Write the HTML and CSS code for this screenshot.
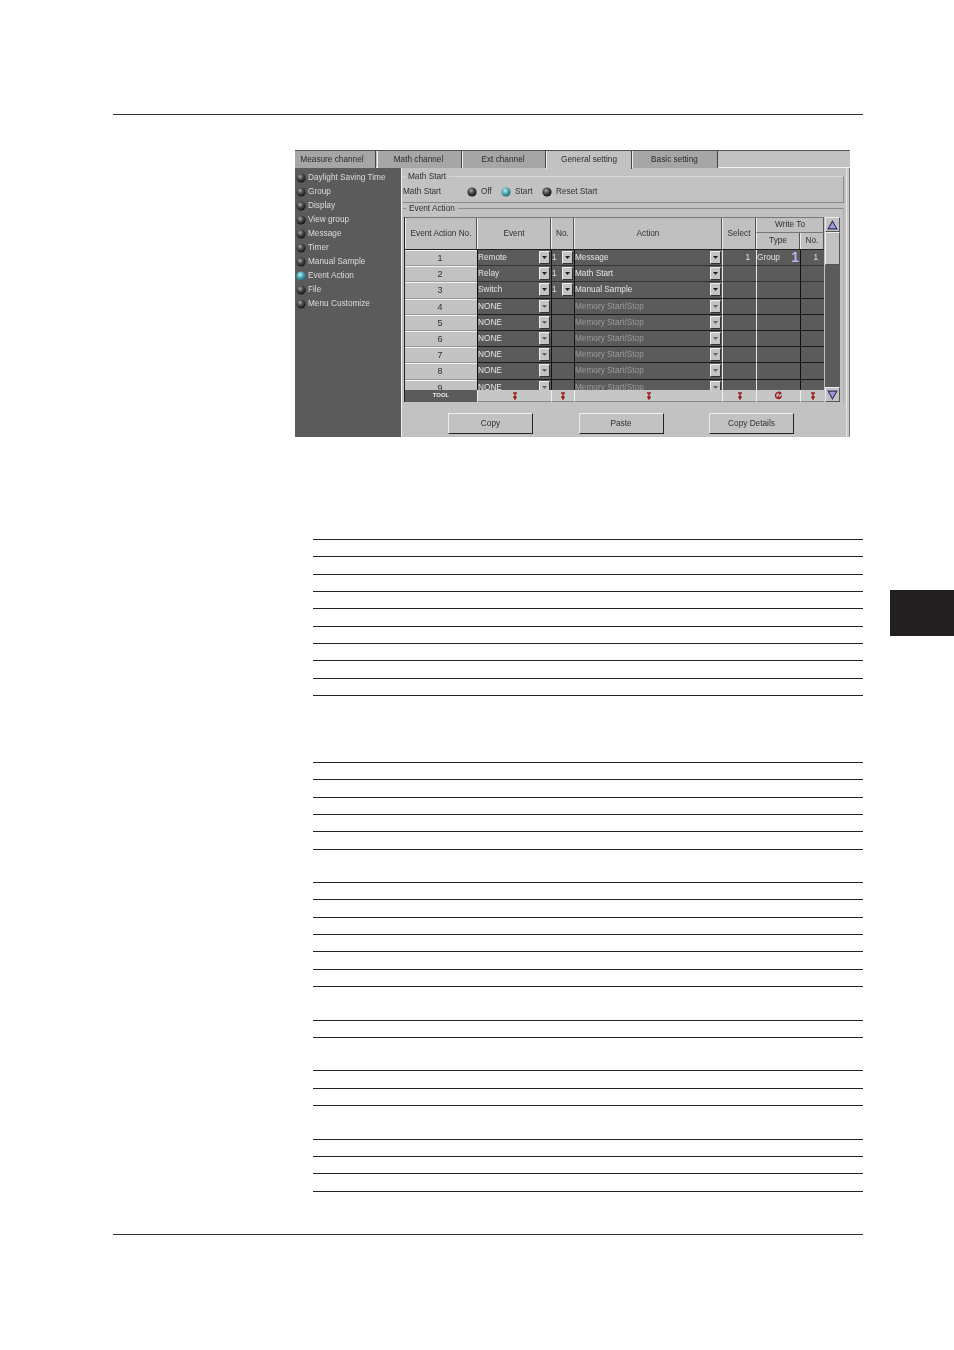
FILE: index.html
```html
<!DOCTYPE html>
<html lang="en">
<head>
<meta charset="utf-8">
<title>Event Action</title>
<link rel="stylesheet" href="styles.css">
</head>
<body>
<svg class="defs" width="0" height="0" aria-hidden="true">
  <defs>
    <radialGradient id="ledOff" cx="40%" cy="35%" r="70%"><stop offset="0" stop-color="#a8a8a8"/><stop offset=".45" stop-color="#4a4a4a"/><stop offset="1" stop-color="#0c0c0c"/></radialGradient>
    <radialGradient id="ledOn" cx="40%" cy="35%" r="70%"><stop offset="0" stop-color="#c8f0f0"/><stop offset=".5" stop-color="#48a8b0"/><stop offset="1" stop-color="#1c6070"/></radialGradient>
    <symbol id="off" viewBox="0 0 10 10"><circle cx="5" cy="5" r="4.6" fill="url(#ledOff)"/></symbol>
    <symbol id="on" viewBox="0 0 10 10"><circle cx="5" cy="5" r="4.6" fill="url(#ledOn)"/></symbol>
    <symbol id="pin" viewBox="0 0 6 8"><path d="M1 1h4M3 1v6M1.5 4.5L3 7l1.5-2.5" fill="none" stroke="#961c1c" stroke-width="1.4"/></symbol>
    <symbol id="cycle" viewBox="0 0 9 9"><path d="M7.5 4.5a3 3 0 1 1-1-2.3M5 .8l1.8 1.4-1.8 1.2M4.5 4.5v3.5" fill="none" stroke="#961c1c" stroke-width="1.4"/></symbol>
    <symbol id="drop" viewBox="0 0 5 3"><path d="M0 0h5L2.5 3z" fill="#202020"/></symbol>
  </defs>
</svg>
<div class="page">
  <div class="rule top"></div>

  <div class="shot">
    <div class="tabs">
      <div class="tab t1">Measure channel</div>
      <div class="tab t2">Math channel</div>
      <div class="tab t3">Ext channel</div>
      <div class="tab t4 active">General setting</div>
      <div class="tab t5">Basic setting</div>
    </div>
    <div class="body">
      <ul class="side">
        <li><svg class="led"><use href="#off"/></svg>Daylight Saving Time</li>
        <li><svg class="led"><use href="#off"/></svg>Group</li>
        <li><svg class="led"><use href="#off"/></svg>Display</li>
        <li><svg class="led"><use href="#off"/></svg>View group</li>
        <li><svg class="led"><use href="#off"/></svg>Message</li>
        <li><svg class="led"><use href="#off"/></svg>Timer</li>
        <li><svg class="led"><use href="#off"/></svg>Manual Sample</li>
        <li><svg class="led"><use href="#on"/></svg>Event Action</li>
        <li><svg class="led"><use href="#off"/></svg>File</li>
        <li><svg class="led"><use href="#off"/></svg>Menu Customize</li>
      </ul>
      <div class="main">
        <fieldset class="group math">
          <legend>Math Start</legend>
          <div class="radios">
            <span class="rlabel">Math Start</span>
            <span class="radio r-off"><svg class="led"><use href="#off"/></svg>Off</span>
            <span class="radio r-start"><svg class="led"><use href="#on"/></svg>Start</span>
            <span class="radio"><svg class="led"><use href="#off"/></svg>Reset Start</span>
          </div>
        </fieldset>
        <fieldset class="group action">
          <legend>Event Action</legend>
          <div class="gridwrap">
            <div class="gridmain">
              <div class="head">
                <div class="hc h-no">Event Action No.</div>
                <div class="hc h-ev">Event</div>
                <div class="hc h-n">No.</div>
                <div class="hc h-ac">Action</div>
                <div class="hc h-se">Select</div>
                <div class="hc h-wr">Write To</div>
                <div class="hc h-ty">Type</div>
                <div class="hc h-wn">No.</div>
              </div>
              <div class="rows">
                <div class="row"><div class="num">1</div><div class="cell ev">Remote<i class="dd"><svg><use href="#drop"/></svg></i></div><div class="cell nn">1<i class="dd"><svg><use href="#drop"/></svg></i></div><div class="cell ac">Message<i class="dd"><svg><use href="#drop"/></svg></i></div><div class="cell se">1</div><div class="cell ty">Group<b class="spin">1</b></div><div class="cell wn">1</div></div>
                <div class="row"><div class="num">2</div><div class="cell ev">Relay<i class="dd"><svg><use href="#drop"/></svg></i></div><div class="cell nn">1<i class="dd"><svg><use href="#drop"/></svg></i></div><div class="cell ac">Math Start<i class="dd"><svg><use href="#drop"/></svg></i></div><div class="cell se"></div><div class="cell ty"></div><div class="cell wn"></div></div>
                <div class="row"><div class="num">3</div><div class="cell ev">Switch<i class="dd"><svg><use href="#drop"/></svg></i></div><div class="cell nn">1<i class="dd"><svg><use href="#drop"/></svg></i></div><div class="cell ac">Manual Sample<i class="dd"><svg><use href="#drop"/></svg></i></div><div class="cell se"></div><div class="cell ty"></div><div class="cell wn"></div></div>
                <div class="row dim"><div class="num">4</div><div class="cell ev">NONE<i class="dd"><svg><use href="#drop"/></svg></i></div><div class="cell nn"></div><div class="cell ac">Memory Start/Stop<i class="dd"><svg><use href="#drop"/></svg></i></div><div class="cell se"></div><div class="cell ty"></div><div class="cell wn"></div></div>
                <div class="row dim"><div class="num">5</div><div class="cell ev">NONE<i class="dd"><svg><use href="#drop"/></svg></i></div><div class="cell nn"></div><div class="cell ac">Memory Start/Stop<i class="dd"><svg><use href="#drop"/></svg></i></div><div class="cell se"></div><div class="cell ty"></div><div class="cell wn"></div></div>
                <div class="row dim"><div class="num">6</div><div class="cell ev">NONE<i class="dd"><svg><use href="#drop"/></svg></i></div><div class="cell nn"></div><div class="cell ac">Memory Start/Stop<i class="dd"><svg><use href="#drop"/></svg></i></div><div class="cell se"></div><div class="cell ty"></div><div class="cell wn"></div></div>
                <div class="row dim"><div class="num">7</div><div class="cell ev">NONE<i class="dd"><svg><use href="#drop"/></svg></i></div><div class="cell nn"></div><div class="cell ac">Memory Start/Stop<i class="dd"><svg><use href="#drop"/></svg></i></div><div class="cell se"></div><div class="cell ty"></div><div class="cell wn"></div></div>
                <div class="row dim"><div class="num">8</div><div class="cell ev">NONE<i class="dd"><svg><use href="#drop"/></svg></i></div><div class="cell nn"></div><div class="cell ac">Memory Start/Stop<i class="dd"><svg><use href="#drop"/></svg></i></div><div class="cell se"></div><div class="cell ty"></div><div class="cell wn"></div></div>
                <div class="row dim"><div class="num">9</div><div class="cell ev">NONE<i class="dd"><svg><use href="#drop"/></svg></i></div><div class="cell nn"></div><div class="cell ac">Memory Start/Stop<i class="dd"><svg><use href="#drop"/></svg></i></div><div class="cell se"></div><div class="cell ty"></div><div class="cell wn"></div></div>
              </div>
              <div class="tool">
                <div class="tlabel">TOOL</div>
                <div class="tc"><svg class="pin"><use href="#pin"/></svg></div>
                <div class="tc"><svg class="pin"><use href="#pin"/></svg></div>
                <div class="tc"><svg class="pin"><use href="#pin"/></svg></div>
                <div class="tc"><svg class="pin"><use href="#pin"/></svg></div>
                <div class="tc"><svg class="cy"><use href="#cycle"/></svg></div>
                <div class="tc"><svg class="pin"><use href="#pin"/></svg></div>
              </div>
            </div>
            <div class="scroll">
              <div class="sbtn"><svg viewBox="0 0 10 9"><path d="M5 1L9 8H1z" fill="#9a9ae0" stroke="#30305a"/></svg></div>
              <div class="thumb"></div>
              <div class="track"></div>
              <div class="sbtn"><svg viewBox="0 0 10 9"><path d="M5 8L9 1H1z" fill="#9a9ae0" stroke="#30305a"/></svg></div>
            </div>
          </div>
        </fieldset>
        <div class="buttons">
          <button class="btn">Copy</button>
          <button class="btn">Paste</button>
          <button class="btn">Copy Details</button>
        </div>
      </div>
      <div class="edge"></div>
    </div>
  </div>

  <div class="list list-a">
    <div class="ln"></div><div class="ln"></div><div class="ln"></div><div class="ln"></div><div class="ln"></div><div class="ln"></div><div class="ln"></div><div class="ln"></div><div class="ln"></div>
  </div>

  <div class="list list-b">
    <div class="ln"></div><div class="ln"></div><div class="ln"></div><div class="ln"></div><div class="ln"></div><div class="ln tall"></div>
    <div class="ln"></div><div class="ln"></div><div class="ln"></div><div class="ln"></div><div class="ln"></div><div class="ln"></div><div class="ln tall"></div>
    <div class="ln"></div><div class="ln tall"></div>
    <div class="ln"></div><div class="ln"></div><div class="ln tall"></div>
    <div class="ln"></div><div class="ln"></div><div class="ln"></div>
  </div>

  <div class="rule bottom"></div>
</div>
<div class="thumbtab"></div>
</body>
</html>
```
FILE: styles.css
```css
* { box-sizing: border-box; }
html, body { margin: 0; padding: 0; background: #fff; }
body { font-family: "Liberation Sans", Arial, sans-serif; height: 1350px; overflow: hidden; position: relative; }
.defs { position: absolute; }
.page { width: 863px; margin-left: 113px; padding-top: 114px; }
.rule { height: 1px; background: #333; width: 750px; }
.rule.bottom { margin-top: 42px; }

/* screenshot */
.shot { width: 555px; height: 287px; margin: 35px 0 0 182px; background: #c2c2c2; color: #303030; font-size: 8.25px; line-height: 12px; display: flex; flex-direction: column; overflow: hidden; filter: blur(.3px); }
.tabs { height: 18px; display: flex; border-top: 1px solid #555; flex: none; border-bottom: 1px solid #f0f0f0; }
.tab { height: 17px; background: #a6a6a6; border-right: 1px solid #444; border-left: 1px solid #eee; text-align: center; padding-top: 3px; color: #2a2a2a; }
.t1 { width: 81px; padding-right: 6px; border-left: 0; }
.t2 { width: 85px; margin-left: 1px; padding-right: 2px; }
.t3 { width: 84px; padding-right: 2px; }
.t4 { width: 86px; background: #c2c2c2; height: 18px; }
.t5 { width: 86px; padding-right: 1px; }
.body { flex: 1; display: flex; min-height: 0; }
.side { margin: 0; padding: 3px 0 0 1px; list-style: none; width: 106px; flex: none; background: #5b5b5b; color: #dcdcdc; }
.side li { height: 14px; display: flex; align-items: center; gap: 2px; white-space: nowrap; }
.led { width: 10px; height: 10px; flex: none; }
.main { width: 445px; flex: none; border-left: 1px solid #f0f0f0; padding: 3px 2px 0 1px; display: flex; flex-direction: column; }
.edge { width: 4px; flex: none; border-left: 1px solid #e8e8e8; border-right: 1px solid #777; background: #c8c8c8; }
.group { margin: 0; padding: 0; border: 0; border-top: 1px solid #8a8a8a; position: relative; }
.group legend { padding: 0 3px; margin-left: 2px; line-height: 11px; }
.math { height: 32px; border-top-color: #d8d8d8; border-right: 1px solid #8a8a8a; border-bottom: 1px solid #888; }
.radios { display: flex; align-items: center; height: 14px; margin-top: 3px; }
.rlabel { width: 64px; }
.radio { display: flex; align-items: center; gap: 4px; }
.r-off { width: 34px; }
.r-start { width: 41px; }
.action { height: 199px; padding: 0 0 0 1px; border-right: 1px solid #aaa; }
.gridwrap { display: flex; gap: 1px; margin-top: 3px; border-left: 1px solid #222; }
.gridmain { width: 419px; flex: none; }
.head { display: grid; grid-template-columns: 72px 74px 23px 148px 34px 44px 24px; grid-template-rows: 15px 16px; height: 33px; background: #c0c0c0; border-top: 1px solid #777; border-bottom: 1px solid #222; }
.hc { display: flex; align-items: center; justify-content: center; border-right: 1px solid #555; border-left: 1px solid #eee; text-align: center; white-space: nowrap; }
.h-no, .h-ev, .h-n, .h-ac, .h-se { grid-row: 1 / 3; }
.h-wr { grid-column: 6 / 8; border-bottom: 1px solid #777; }
.rows { height: 140px; overflow: hidden; }
.row { display: grid; grid-template-columns: 72px 74px 23px 148px 34px 44px 24px; height: 16.2px; background: #5b5b5b; color: #e4e4e4; }
.num { background: #c2c2c2; color: #303030; font-size: 9px; text-align: center; padding-right: 2px; border-top: 1px solid #f4f4f4; border-bottom: 1px solid #999; height: 16.2px; line-height: 14px; }
.cell { position: relative; border-left: 1px solid #111; border-bottom: 1px solid #1a1a1a; white-space: nowrap; line-height: 15px; }
.row:nth-child(1) .cell, .row:nth-child(2) .cell { border-bottom-color: #333; }
.dd { position: absolute; top: 1px; right: 1px; width: 11px; height: 13px; background: #c4c4c4; border-left: 1px solid #eee; border-top: 1px solid #eee; border-right: 1px solid #333; border-bottom: 1px solid #333; display: flex; align-items: center; justify-content: center; }
.dd svg { width: 5px; height: 3px; }
.dim .ac { color: #9c9c9c; }
.dim .dd svg { opacity: .6; }
.se, .wn { text-align: right; padding-right: 6px; }
.se, .ty { border-left-color: #e8e8e8; }
.wn { border-left-color: #111; }
.spin { position: absolute; right: 1px; top: 0; font-size: 14px; color: #b4b4f4; line-height: 15px; font-weight: 700; }
.tool { display: grid; grid-template-columns: 72px 74px 23px 148px 34px 44px 24px; height: 12px; background: #c6c6c6; }
.tlabel { background: #5b5b5b; color: #e8e8e8; font-size: 6px; text-align: center; line-height: 11px; font-weight: 700; }
.tc { border-left: 1px solid #f0f0f0; display: flex; justify-content: center; align-items: center; border-bottom: 1px solid #888; }
.pin { width: 6px; height: 8px; }
.cy { width: 9px; height: 9px; }
.scroll { width: 15px; flex: none; height: 185px; display: flex; flex-direction: column; background: #5b5b5b; }
.sbtn { height: 15px; flex: none; background: #c2c2c2; border: 1px solid #555; border-left-color: #eee; border-top-color: #eee; display: flex; align-items: center; justify-content: center; }
.sbtn svg { width: 11px; height: 10px; }
.thumb { height: 33px; flex: none; background: #c2c2c2; border-left: 1px solid #eee; border-top: 1px solid #eee; border-right: 1px solid #555; border-bottom: 1px solid #555; }
.track { flex: 1; }
.buttons { display: flex; gap: 45.5px; padding-left: 45px; margin-top: 11px; }
.btn { width: 85px; height: 21px; padding: 0; background: #c2c2c2; font: inherit; color: #303030; border: 1px solid #eee; border-right-color: #222; border-bottom-color: #222; }

/* rule lists */
.list { width: 550px; }
.list-a { margin: 102px 0 0 200px; border-top: 1px solid #222; }
.list-b { margin: 66px 0 0 200px; border-top: 1px solid #222; }
.ln { height: 17.33px; border-bottom: 1px solid #222; }
.ln.tall { height: 33.5px; }

.thumbtab { position: absolute; left: 890px; top: 590px; width: 64px; height: 46px; background: #231f20; }
```
